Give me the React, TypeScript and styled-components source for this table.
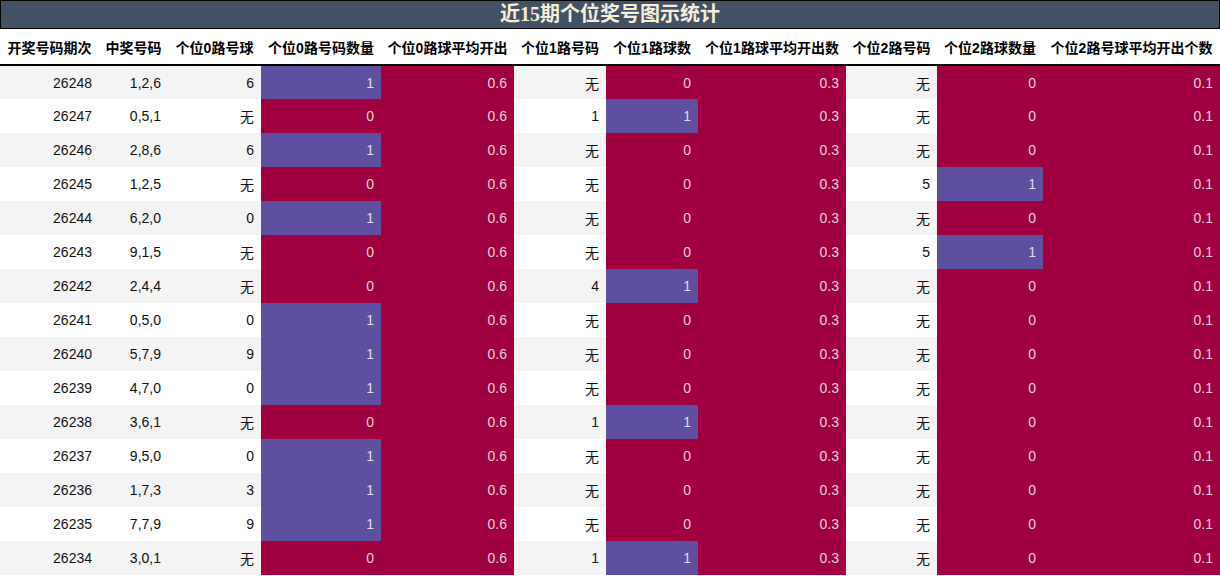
import React from "react";
import styled, { createGlobalStyle } from "styled-components";

const Global = createGlobalStyle`
  html, body { margin: 0; padding: 0; background: #fff; }
  body { font-family: "Liberation Sans", "Noto Sans CJK SC", sans-serif; }
`;

const Wrap = styled.div`
  width: 1220px;
`;

const Title = styled.div`
  box-sizing: border-box;
  height: 29px;
  border: 1px solid #000;
  background: #435165;
  color: #f4eedb;
  font-family: "Liberation Serif", "Noto Sans CJK SC", serif;
  font-weight: bold;
  font-size: 20px;
  line-height: 27px;
  text-align: center;
`;

const Table = styled.table`
  width: 1220px;
  border-collapse: collapse;
  table-layout: fixed;
`;

const Th = styled.th`
  height: 36px;
  padding: 0;
  font-size: 14px;
  font-weight: bold;
  color: #000;
  text-align: center;
  white-space: nowrap;
  border-bottom: 2px solid #000;
  box-sizing: border-box;
`;

const Row = styled.tr<{ $odd: boolean }>`
  background: ${(p) => (p.$odd ? "#f4f4f4" : "#ffffff")};
`;

type Tone = "plain" | "purple" | "red";

const Td = styled.td<{ $tone: Tone }>`
  height: 34px;
  padding: 0 7px 0 0;
  font-size: 14px;
  text-align: right;
  white-space: nowrap;
  box-sizing: border-box;
  color: ${(p) => (p.$tone === "plain" ? "#111" : "rgba(255,255,255,0.82)")};
  background: ${(p) =>
    p.$tone === "purple" ? "#5f4fa0" : p.$tone === "red" ? "#a0003f" : "transparent"};
`;

const widths = [99, 69, 93, 120, 133, 92, 92, 148, 91, 106, 177];

const headers = [
  "开奖号码期次",
  "中奖号码",
  "个位0路号球",
  "个位0路号码数量",
  "个位0路球平均开出",
  "个位1路号码",
  "个位1路球数",
  "个位1路球平均开出数",
  "个位2路号码",
  "个位2路球数量",
  "个位2路号球平均开出个数",
];

type R = [string, string, string, string, string, string, string];
const rows: R[] = [
  ["26248", "1,2,6", "6", "无", "0", "无", "0"],
  ["26247", "0,5,1", "无", "1", "1", "无", "0"],
  ["26246", "2,8,6", "6", "无", "0", "无", "0"],
  ["26245", "1,2,5", "无", "无", "0", "5", "1"],
  ["26244", "6,2,0", "0", "无", "0", "无", "0"],
  ["26243", "9,1,5", "无", "无", "0", "5", "1"],
  ["26242", "2,4,4", "无", "4", "1", "无", "0"],
  ["26241", "0,5,0", "0", "无", "0", "无", "0"],
  ["26240", "5,7,9", "9", "无", "0", "无", "0"],
  ["26239", "4,7,0", "0", "无", "0", "无", "0"],
  ["26238", "3,6,1", "无", "1", "1", "无", "0"],
  ["26237", "9,5,0", "0", "无", "0", "无", "0"],
  ["26236", "1,7,3", "3", "无", "0", "无", "0"],
  ["26235", "7,7,9", "9", "无", "0", "无", "0"],
  ["26234", "3,0,1", "无", "1", "1", "无", "0"],
];

const countTone = (v: string): Tone => (v === "1" ? "purple" : "red");

export default function App() {
  return (
    <Wrap>
      <Global />
      <Title>近15期个位奖号图示统计</Title>
      <Table>
        <colgroup>
          {widths.map((w, i) => (
            <col key={i} style={{ width: w }} />
          ))}
        </colgroup>
        <thead>
          <tr>
            {headers.map((h) => (
              <Th key={h}>{h}</Th>
            ))}
          </tr>
        </thead>
        <tbody>
          {rows.map((r, i) => {
            const c0 = r[2] === "无" ? "0" : "1";
            return (
              <Row key={r[0]} $odd={i % 2 === 0}>
                <Td $tone="plain">{r[0]}</Td>
                <Td $tone="plain">{r[1]}</Td>
                <Td $tone="plain">{r[2]}</Td>
                <Td $tone={countTone(c0)}>{c0}</Td>
                <Td $tone="red">0.6</Td>
                <Td $tone="plain">{r[3]}</Td>
                <Td $tone={countTone(r[4])}>{r[4]}</Td>
                <Td $tone="red">0.3</Td>
                <Td $tone="plain">{r[5]}</Td>
                <Td $tone={countTone(r[6])}>{r[6]}</Td>
                <Td $tone="red">0.1</Td>
              </Row>
            );
          })}
        </tbody>
      </Table>
    </Wrap>
  );
}
